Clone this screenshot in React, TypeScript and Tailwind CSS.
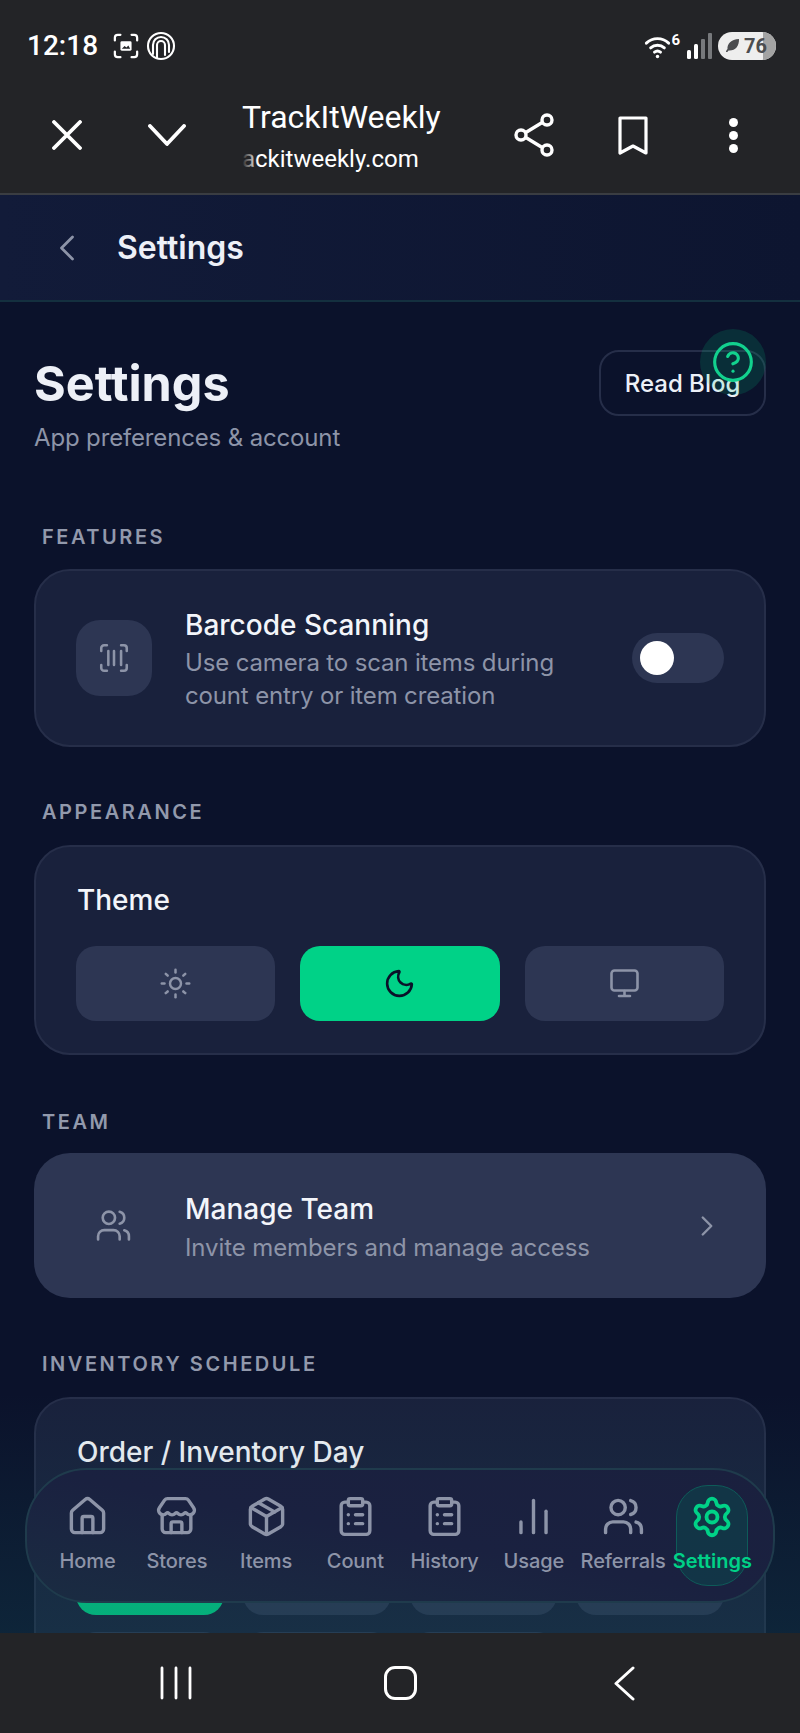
import {
  ChartNoAxesColumn,
  ChevronLeft,
  ChevronRight,
  CircleHelp,
  ClipboardList,
  House,
  Moon,
  Package,
  ScanBarcode,
  Settings,
  Store,
  Sun,
  Users,
} from 'lucide-react'

const navItems = [
  { label: 'Home', icon: House },
  { label: 'Stores', icon: Store },
  { label: 'Items', icon: Package },
  { label: 'Count', icon: ClipboardList },
  { label: 'History', icon: ClipboardList },
  { label: 'Usage', icon: ChartNoAxesColumn },
  { label: 'Referrals', icon: Users },
]

function StatusBar() {
  return (
    <div className="flex h-[90px] items-center pl-[27px] pr-[24px] pt-[1px] text-white">
      <span className="font-['Roboto',sans-serif] text-[28px] font-medium leading-none">12:18</span>
      <svg className="ml-[15px]" width="26" height="26" viewBox="0 0 28 28" fill="none" stroke="#fff" strokeWidth="2.4" strokeLinecap="round">
        <path d="M2 8V5a3 3 0 0 1 3-3h3M20 2h3a3 3 0 0 1 3 3v3M26 20v3a3 3 0 0 1-3 3h-3M8 26H5a3 3 0 0 1-3-3v-3" />
        <rect x="8" y="9" width="12" height="10" rx="1.5" fill="#fff" stroke="none" />
        <path d="M9.5 17l3-3 2 1.5 2-2 2 3.5z" fill="#232427" stroke="none" />
      </svg>
      <svg className="ml-[7px]" width="30" height="30" viewBox="0 0 30 30" fill="none" stroke="#fff" strokeWidth="2.1" strokeLinecap="round">
        <circle cx="15" cy="15" r="13" />
        <path d="M7 23V14a8 8 0 0 1 16 0v7" />
        <path d="M11 27V14a4 4 0 0 1 8 0v10" />
      </svg>
      <div className="ml-auto flex items-center">
        <div className="relative h-[26px] w-[36px]">
          <svg className="absolute left-0 top-[2px]" width="27" height="24" viewBox="0 0 30 28" fill="none" stroke="#fff" strokeWidth="3.4" strokeLinecap="round">
            <path d="M2 9.5c7.5-7 18.500-7 26 0" />
            <path d="M7 15c4.500-4 11.500-4 16 0" />
            <path d="M11.500 20c2-1.600 5-1.600 7 0" />
            <circle cx="15" cy="25" r="2" fill="#fff" stroke="none" />
          </svg>
          <span className="absolute right-0 top-0 font-['Roboto',sans-serif] text-[15px] font-bold leading-none">6</span>
        </div>
        <svg className="ml-[7px]" width="25" height="26" viewBox="0 0 25 26" fill="#fff">
          <rect x="0" y="17" width="4" height="9" rx="1.500" />
          <rect x="7" y="11" width="4" height="15" rx="1.500" />
          <rect x="14" y="6" width="4" height="20" rx="1" fill="#77797c" />
          <rect x="21" y="0" width="4" height="26" rx="1" fill="#77797c" />
        </svg>
        <div className="relative ml-[6px] flex h-[28px] w-[58px] items-center overflow-hidden rounded-full bg-[#eeeeee] pl-[7px]">
          <div className="absolute bottom-0 right-0 top-0 w-[13px] bg-[#a3a3a3]" />
          <svg className="relative" width="15" height="15" viewBox="0 0 15 15" fill="#4b4c4f">
            <path d="M1 14c0-1 .6-2 1.500-3C2 6 6 1.500 14 1c.2 7-3.500 11.500-9.500 11.500-1 0-1.600.4-2 1.500z" />
          </svg>
          <span className="relative ml-[4px] font-['Roboto',sans-serif] text-[20px] font-bold leading-none text-[#4b4c4f]">76</span>
        </div>
      </div>
    </div>
  )
}

function BrowserBar() {
  return (
    <div className="flex h-[90px] items-center pl-[45px] text-white">
      <div className="flex w-[44px] justify-center">
        <svg width="30" height="30" viewBox="0 0 30 30" fill="none" stroke="#fff" strokeWidth="3.800" strokeLinecap="round">
          <path d="M2 2l26 26M28 2L2 28" />
        </svg>
      </div>
      <div className="ml-[53px] flex w-[50px] justify-center">
        <svg width="38" height="23" viewBox="0 0 38 23" fill="none" stroke="#fff" strokeWidth="3.800" strokeLinecap="round" strokeLinejoin="round">
          <path d="M2 2l17 18L36 2" />
        </svg>
      </div>
      <div className="ml-[50px] w-[270px] pt-[2px] font-['Roboto',sans-serif]">
        <div className="text-[32px] leading-[38px]">TrackItWeekly</div>
        <div className="relative mt-[8px] w-[175px] whitespace-nowrap text-[24px] leading-[30px]">
          <span>ackitweekly.com</span>
          <div className="absolute bottom-0 left-0 top-0 w-[16px] bg-linear-to-r from-[#232427] to-transparent" />
        </div>
      </div>
      <div className="flex w-[44px] justify-center">
        <svg width="40" height="44" viewBox="0 0 40 44" fill="none" stroke="#fff" strokeWidth="3.400">
          <path d="M11 20l18-11M11 24l18 11" />
          <circle cx="7" cy="22" r="5" />
          <circle cx="33" cy="7" r="5" />
          <circle cx="33" cy="37" r="5" />
        </svg>
      </div>
      <div className="ml-[55px] flex w-[44px] justify-center">
        <svg width="30" height="39" viewBox="0 0 30 39" fill="none" stroke="#fff" strokeWidth="3.200" strokeLinejoin="round">
          <path d="M2 2h26v35l-13-7-13 7z" />
        </svg>
      </div>
      <div className="ml-[56px] flex w-[44px] flex-col items-center gap-[4px]">
        <span className="h-[9px] w-[9px] rounded-full bg-white" />
        <span className="h-[9px] w-[9px] rounded-full bg-white" />
        <span className="h-[9px] w-[9px] rounded-full bg-white" />
      </div>
    </div>
  )
}

function SectionLabel({ text, className }: { text: string; className: string }) {
  return (
    <div className={`pl-[8px] text-[20px] font-semibold uppercase leading-[28px] tracking-[2.550px] text-[#9299ac] ${className}`}>
      {text}
    </div>
  )
}

function ThemeButton({ children, active }: { children: React.ReactNode; active?: boolean }) {
  return (
    <div className={`flex h-[75px] items-center justify-center rounded-[20px] ${active ? 'bg-[#00d287]' : 'bg-[#2d3653]'}`}>
      {children}
    </div>
  )
}

function BottomNav() {
  return (
    <div className="absolute left-[25px] top-[1166px] grid h-[135px] w-[750px] grid-cols-8 rounded-[62px] border-2 border-[#1f3b4c] bg-linear-to-tr from-[#1a2c42] via-[#1a2140] to-[#1a203e] px-[16px] pt-[25px]">
      {navItems.map(item => (
        <div key={item.label} className="flex flex-col items-center text-[#8d94a8]">
          <item.icon size={43} strokeWidth={1.900} />
          <span className="mt-[9px] whitespace-nowrap text-[20px] font-medium leading-[28px] tracking-[-0.1px]">{item.label}</span>
        </div>
      ))}
      <div className="relative flex flex-col items-center text-[#00d287]">
        <div className="absolute left-1/2 top-[-10px] h-[101px] w-[72px] -translate-x-1/2 rounded-[32px] border border-[#0e5b59] bg-[#0f3f4a]/70" />
        <Settings className="relative" size={44} strokeWidth={2.100} />
        <span className="relative mt-[8px] whitespace-nowrap text-[20px] font-semibold leading-[28px]">Settings</span>
      </div>
    </div>
  )
}

export default function App() {
  return (
    <div className="flex h-[1733px] w-[800px] flex-col overflow-hidden bg-[#232427] font-['Inter',sans-serif]">
      <div className="h-[195px] border-b-2 border-[#3a3d42]">
        <StatusBar />
        <BrowserBar />
      </div>

      <div className="flex h-[107px] items-center border-b-2 border-[#14303f] bg-linear-to-r from-[#121b39] to-[#0d1530] pl-[45px] text-[#edf0f7]">
        <ChevronLeft size={44} color="#8d94a8" strokeWidth={1.500} />
        <span className="ml-[28px] text-[32px] font-semibold leading-none">Settings</span>
      </div>

      <div className="relative flex-1 overflow-hidden bg-[#0b122b] px-[34px]">
        <div className="flex items-start justify-between pt-[48px]">
          <div className="pt-[6px]">
            <h1 className="text-[48.500px] font-bold leading-[56px] text-[#edf0f7]">Settings</h1>
            <p className="mt-[10px] text-[24px] leading-[32px] tracking-[-0.15px] text-[#8d94a8]">App preferences &amp; account</p>
          </div>
          <div className="flex h-[66px] w-[167px] items-center justify-center rounded-[20px] border-2 border-[#262e49] pt-[2px] text-[24px] font-medium text-[#edf0f7]">
            Read Blog
          </div>
        </div>

        <SectionLabel text="Features" className="mt-[69px]" />
        <div className="mt-[18px] flex h-[178px] items-center rounded-[36px] border-2 border-[#262e49] bg-[#19213c] px-[40px]">
          <div className="flex h-[76px] w-[76px] items-center justify-center rounded-[24px] bg-[#2d3653]">
            <ScanBarcode size={34} color="#8d94a8" strokeWidth={1.800} />
          </div>
          <div className="ml-[33px] flex-1 pt-[3px]">
            <div className="text-[28px] font-medium leading-[34px] text-[#f3f5fa]">Barcode Scanning</div>
            <div className="mt-[4px] w-[400px] text-[24px] leading-[33px] tracking-[-0.15px] text-[#8d94a8]">
              Use camera to scan items during count entry or item creation
            </div>
          </div>
          <div className="flex h-[50px] w-[92px] items-center rounded-full bg-[#2d3653] pl-[8px]">
            <div className="h-[34px] w-[34px] rounded-full bg-white" />
          </div>
        </div>

        <SectionLabel text="Appearance" className="mt-[51px]" />
        <div className="mt-[19px] h-[210px] rounded-[36px] border-2 border-[#262e49] bg-[#19213c] px-[40px]">
          <div className="pl-[1px] pt-[35px] text-[28px] font-medium leading-[36px] text-[#f3f5fa]">Theme</div>
          <div className="mt-[28px] grid grid-cols-3 gap-[25px]">
            <ThemeButton>
              <Sun size={33} color="#8d94a8" strokeWidth={1.800} />
            </ThemeButton>
            <ThemeButton active>
              <Moon size={33} color="#0a1129" strokeWidth={1.900} />
            </ThemeButton>
            <ThemeButton>
              <svg width="29" height="29" viewBox="0 0 29 29" fill="none" stroke="#8d94a8" strokeWidth="2.600" strokeLinecap="round" strokeLinejoin="round">
                <rect x="1.500" y="1.500" width="26" height="20" rx="3" />
                <path d="M14.500 22v5M9 27h11" />
              </svg>
            </ThemeButton>
          </div>
        </div>

        <SectionLabel text="Team" className="mt-[53px]" />
        <div className="mt-[17px] flex h-[145px] items-center rounded-[36px] bg-[#2d3653] pl-[61px] pr-[42px]">
          <Users size={37} color="#8d94a8" strokeWidth={1.700} />
          <div className="ml-[53px] flex-1 pt-[4px]">
            <div className="text-[28px] font-medium leading-[34px] text-[#f3f5fa]">Manage Team</div>
            <div className="mt-[6px] text-[24px] leading-[32px] tracking-[-0.1px] text-[#8d94a8]">Invite members and manage access</div>
          </div>
          <ChevronRight size={34} color="#8d94a8" strokeWidth={1.700} />
        </div>

        <SectionLabel text="Inventory Schedule" className="mt-[52px]" />
        <div className="mt-[19px] h-[300px] rounded-t-[36px] border-2 border-[#262e49] bg-[#19213c] px-[40px]">
          <div className="pl-[1px] pt-[35px] text-[28px] font-medium leading-[36px] text-[#f3f5fa]">Order / Inventory Day</div>
          <div className="mt-[71px] grid grid-cols-4 gap-[19px]">
            <div className="h-[74px] rounded-[20px] bg-[#00d287]" />
            <div className="h-[74px] rounded-[20px] bg-[#2d3653]" />
            <div className="h-[74px] rounded-[20px] bg-[#2d3653]" />
            <div className="h-[74px] rounded-[20px] bg-[#2d3653]" />
          </div>
          <div className="mt-[17px] grid grid-cols-4 gap-[19px]">
            <div className="h-[74px] rounded-[20px] bg-[#2d3653]" />
            <div className="h-[74px] rounded-[20px] bg-[#2d3653]" />
            <div className="h-[74px] rounded-[20px] bg-[#2d3653]" />
          </div>
        </div>

        {/* teal tint under the floating nav */}
        <div className="absolute bottom-0 left-0 right-0 h-[240px] bg-linear-to-t from-[#14505a]/30 to-transparent" />

        {/* floating help button */}
        <div className="absolute left-[700px] top-[27px] flex h-[66px] w-[66px] items-center justify-center rounded-full bg-[#00d287]/15">
          <CircleHelp size={44} color="#12d18e" strokeWidth={1.700} />
        </div>

        <BottomNav />
      </div>

      <div className="flex h-[100px] items-center justify-center">
        <div className="flex w-[224px] justify-center">
          <svg width="32" height="34" viewBox="0 0 32 34" fill="none" stroke="#fff" strokeWidth="2.800" strokeLinecap="round">
            <path d="M2 2v30M16 2v30M30 2v30" />
          </svg>
        </div>
        <div className="flex w-[224px] justify-center">
          <div className="h-[34px] w-[33px] rounded-[11px] border-[3px] border-white" />
        </div>
        <div className="flex w-[224px] justify-center">
          <svg width="22" height="35" viewBox="0 0 22 35" fill="none" stroke="#fff" strokeWidth="3" strokeLinecap="round" strokeLinejoin="round">
            <path d="M20 2L3 17.500 20 33" />
          </svg>
        </div>
      </div>
    </div>
  )
}
